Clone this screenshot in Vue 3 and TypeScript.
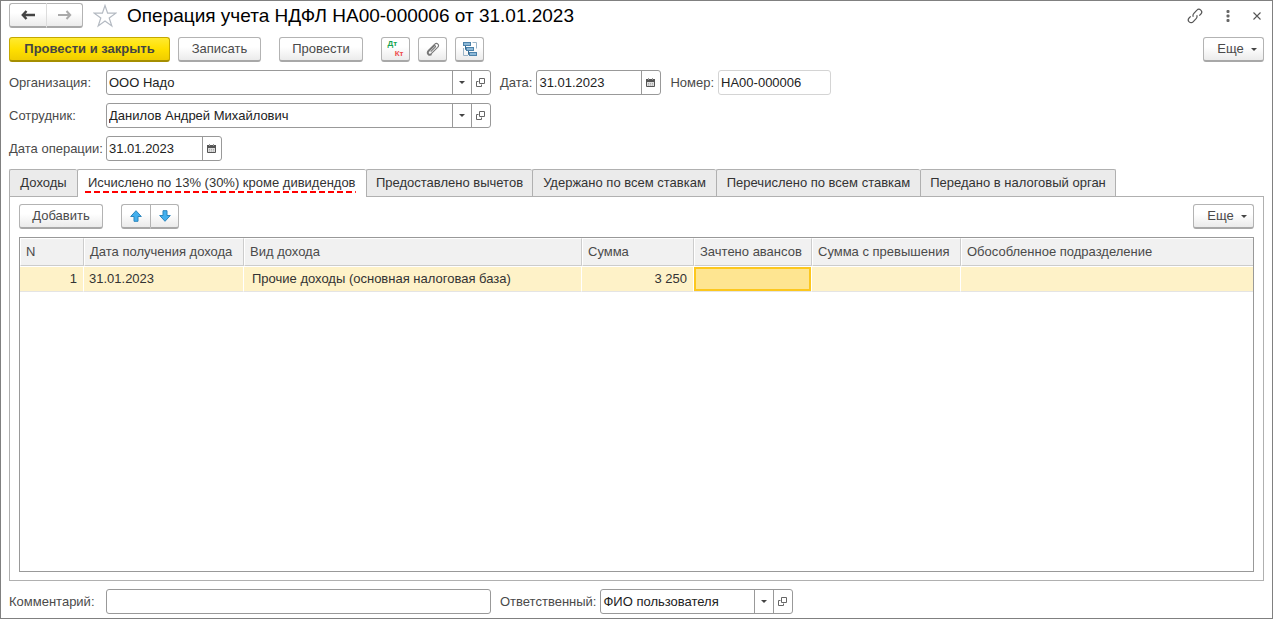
<script setup lang="ts">
import { ref } from 'vue'

interface Tab {
  title: string
  width: number
}

interface IncomeRow {
  n: number
  date: string
  kind: string
  sum: string
  advance: string
  excess: string
  department: string
}

const organization = ref('ООО Надо')
const employee = ref('Данилов Андрей Михайлович')
const docDate = ref('31.01.2023')
const docNumber = ref('НА00-000006')
const operationDate = ref('31.01.2023')
const comment = ref('')
const responsible = ref('ФИО пользователя')
const activeTab = ref(1)

const tabs: Tab[] = [
  { title: 'Доходы', width: 68 },
  { title: 'Исчислено по 13% (30%) кроме дивидендов', width: 289 },
  { title: 'Предоставлено вычетов', width: 166 },
  { title: 'Удержано по всем ставкам', width: 184 },
  { title: 'Перечислено по всем ставкам', width: 204 },
  { title: 'Передано в налоговый орган', width: 196 },
]

const rows: IncomeRow[] = [
  {
    n: 1,
    date: '31.01.2023',
    kind: 'Прочие доходы (основная налоговая база)',
    sum: '3 250',
    advance: '',
    excess: '',
    department: '',
  },
]
</script>

<template>
  <main class="window">
    <header class="titlebar">
      <div class="group nav">
        <button type="button" class="btn" aria-label="Назад">
          <svg width="14" height="12" viewBox="0 0 14 12"><path d="M5.500 2 1.800 6 5.500 10M2 6H14" fill="none" stroke="#444" stroke-width="2.4" /></svg>
        </button>
        <button type="button" class="btn" aria-label="Вперед">
          <svg width="14" height="12" viewBox="0 0 14 12"><path d="M8.500 2 12.200 6 8.500 10M12 6H0" fill="none" stroke="#aaa" stroke-width="2" /></svg>
        </button>
      </div>
      <button type="button" class="plain star" aria-label="В избранное">
        <svg width="24" height="24" viewBox="0 0 24 24"><path d="M12 1.500 14.600 9.200H22.800L16.200 14 18.800 22 12 17.100 5.200 22 7.800 14 1.200 9.200H9.400Z" fill="#fff" stroke="#b4bac2" stroke-width="1.200" /></svg>
      </button>
      <h1>Операция учета НДФЛ НА00-000006 от 31.01.2023</h1>
      <div class="window-tools">
        <button type="button" class="plain" aria-label="Получить ссылку">
          <svg width="16" height="16" viewBox="0 0 16 16" fill="none" stroke="#555" stroke-width="1.2"><path d="M6.300 8.800C5.700 7.600 6 6.300 6.900 5.300L9.900 2.200C11 1 12.600 1 13.800 2.100 15 3.300 15 4.900 13.900 6L12.300 7.600" /><path d="M9.700 7.200C10.300 8.400 10 9.700 9.100 10.700L6.100 13.800C5 15 3.400 15 2.200 13.900 1 12.700 1 11.100 2.100 10L3.700 8.400" /></svg>
        </button>
        <button type="button" class="plain" aria-label="Меню">
          <svg width="4" height="12" viewBox="0 0 4 12" fill="#666"><rect x=".5" y="0" width="3" height="3" rx="1" /><rect x=".5" y="4.500" width="3" height="3" rx="1" /><rect x=".5" y="9" width="3" height="3" rx="1" /></svg>
        </button>
        <button type="button" class="plain" aria-label="Закрыть">
          <svg width="8" height="8" viewBox="0 0 8 8"><path d="M.5.5 7.500 7.500M7.500.5.5 7.500" stroke="#555" stroke-width="1.1" /></svg>
        </button>
      </div>
    </header>

    <div class="toolbar">
      <button type="button" class="btn primary">Провести и закрыть</button>
      <button type="button" class="btn save">Записать</button>
      <button type="button" class="btn post">Провести</button>
      <button type="button" class="btn icon entries" aria-label="Дт Кт">
        <span class="dtkt"><span class="dt">Дт</span><span class="kt">Кт</span></span>
      </button>
      <button type="button" class="btn icon" aria-label="Присоединенные файлы">
        <svg width="14" height="14" viewBox="0 0 14 14" fill="none" stroke="#777" stroke-width="1.1"><path d="M4.700 9.700 9.200 5.200C10 4.300 9 3.200 8.100 4L3 9.200C1 11.300 3.300 13.500 5.300 11.600L11.600 5.400C14 2.800 11 0 8.500 2.400L2.400 8.400C-.2 11.200 2.800 14.600 5.800 12.600" /></svg>
      </button>
      <button type="button" class="btn icon" aria-label="Структура подчиненности">
        <svg width="14" height="14" viewBox="0 0 14 14"><path d="M9.500.5H13.500V6.500M.5 6V13.500H5" fill="none" stroke="#9ab4c8" /><path d="M2.500 4V7.500H4M5.500 9V12.500H7" fill="none" stroke="#34688f" /><rect x=".5" y=".5" width="7" height="3" fill="#8db9d8" stroke="#4c82aa" /><rect x="3.500" y="5.500" width="7" height="3" fill="#8db9d8" stroke="#4c82aa" /><rect x="6.500" y="10.500" width="7" height="3" fill="#8db9d8" stroke="#4c82aa" /></svg>
      </button>
      <button type="button" class="btn more">Еще<svg width="6" height="3" viewBox="0 0 6 3"><path d="M0 0H6L3 3Z" fill="#444" /></svg></button>
    </div>

    <section class="fields">
      <div class="line">
        <label class="lead" for="org">Организация:</label>
        <div class="field wide">
          <input id="org" v-model="organization" type="text" />
          <button type="button" aria-label="Выбрать организацию"><svg width="6" height="3" viewBox="0 0 6 3"><path d="M0 0H6L3 3Z" fill="#444" /></svg></button>
          <button type="button" aria-label="Открыть организацию"><svg width="9" height="9" viewBox="0 0 9 9" fill="none" stroke="#666"><path d="M3.500.5H8.500V5.500H3.500ZM2.500 3.500H.5V8.500H5.500V6.500" /></svg></button>
        </div>
        <label class="next" for="date">Дата:</label>
        <div class="field date">
          <input id="date" v-model="docDate" type="text" />
          <button type="button" aria-label="Выбрать дату"><svg width="9" height="9" viewBox="0 0 9 9"><path d="M.5 1.500H8.500V8.500H.5Z" fill="#ddd" stroke="#555" /><path d="M0 1H9V4H0Z" fill="#555" /><path d="M2.500 0V2M6.500 0V2" stroke="#999" /><path d="M2 5.500H7M2 7H7" stroke="#aaa" stroke-dasharray="1 1" /></svg></button>
        </div>
        <label class="next" for="number">Номер:</label>
        <div class="field number"><input id="number" v-model="docNumber" type="text" readonly /></div>
      </div>
      <div class="line">
        <label class="lead" for="employee">Сотрудник:</label>
        <div class="field wide">
          <input id="employee" v-model="employee" type="text" />
          <button type="button" aria-label="Выбрать сотрудника"><svg width="6" height="3" viewBox="0 0 6 3"><path d="M0 0H6L3 3Z" fill="#444" /></svg></button>
          <button type="button" aria-label="Открыть сотрудника"><svg width="9" height="9" viewBox="0 0 9 9" fill="none" stroke="#666"><path d="M3.500.5H8.500V5.500H3.500ZM2.500 3.500H.5V8.500H5.500V6.500" /></svg></button>
        </div>
      </div>
      <div class="line">
        <label class="lead" for="opdate">Дата операции:</label>
        <div class="field opdate">
          <input id="opdate" v-model="operationDate" type="text" />
          <button type="button" aria-label="Выбрать дату операции"><svg width="9" height="9" viewBox="0 0 9 9"><path d="M.5 1.500H8.500V8.500H.5Z" fill="#ddd" stroke="#555" /><path d="M0 1H9V4H0Z" fill="#555" /><path d="M2.500 0V2M6.500 0V2" stroke="#999" /><path d="M2 5.500H7M2 7H7" stroke="#aaa" stroke-dasharray="1 1" /></svg></button>
        </div>
      </div>
    </section>

    <div class="tabs" role="tablist">
      <button
        v-for="(tab, i) in tabs"
        :key="tab.title"
        type="button"
        role="tab"
        class="tab"
        :class="{ active: i === activeTab }"
        :aria-selected="i === activeTab"
        :style="{ width: tab.width + 'px' }"
        @click="activeTab = i"
      >
        <span>{{ tab.title }}</span>
      </button>
    </div>

    <section class="panel" role="tabpanel">
      <div class="panel-tools">
        <button type="button" class="btn add">Добавить</button>
        <div class="group move">
          <button type="button" class="btn" aria-label="Переместить вверх">
            <svg width="12" height="12" viewBox="0 0 12 12"><path d="M6 .7 11.300 6.500H8V11.300H4V6.500H.7Z" fill="#43b0ee" stroke="#2b86bd" /></svg>
          </button>
          <button type="button" class="btn" aria-label="Переместить вниз">
            <svg width="12" height="12" viewBox="0 0 12 12"><path d="M6 11.300 11.300 5.500H8V.7H4V5.500H.7Z" fill="#43b0ee" stroke="#2b86bd" /></svg>
          </button>
        </div>
        <button type="button" class="btn more">Еще<svg width="6" height="3" viewBox="0 0 6 3"><path d="M0 0H6L3 3Z" fill="#444" /></svg></button>
      </div>
      <div class="grid">
        <table>
          <colgroup>
            <col class="c-n" /><col class="c-date" /><col class="c-kind" /><col class="c-sum" /><col class="c-adv" /><col class="c-exc" /><col />
          </colgroup>
          <thead>
            <tr>
              <th>N</th>
              <th>Дата получения дохода</th>
              <th>Вид дохода</th>
              <th>Сумма</th>
              <th>Зачтено авансов</th>
              <th>Сумма с превышения</th>
              <th>Обособленное подразделение</th>
            </tr>
          </thead>
          <tbody>
            <tr v-for="row in rows" :key="row.n">
              <td class="num">{{ row.n }}</td>
              <td>{{ row.date }}</td>
              <td class="kind">{{ row.kind }}</td>
              <td class="num">{{ row.sum }}</td>
              <td class="current">{{ row.advance }}</td>
              <td>{{ row.excess }}</td>
              <td>{{ row.department }}</td>
            </tr>
          </tbody>
        </table>
      </div>
    </section>

    <footer class="line bottom">
      <label class="lead" for="comment">Комментарий:</label>
      <div class="field wide"><input id="comment" v-model="comment" type="text" /></div>
      <label class="next" for="responsible">Ответственный:</label>
      <div class="field responsible">
        <input id="responsible" v-model="responsible" type="text" />
        <button type="button" aria-label="Выбрать ответственного"><svg width="6" height="3" viewBox="0 0 6 3"><path d="M0 0H6L3 3Z" fill="#444" /></svg></button>
        <button type="button" aria-label="Открыть ответственного"><svg width="9" height="9" viewBox="0 0 9 9" fill="none" stroke="#666"><path d="M3.500.5H8.500V5.500H3.500ZM2.500 3.500H.5V8.500H5.500V6.500" /></svg></button>
      </div>
    </footer>
  </main>
</template>

<style>
body {
  margin: 0;
  background: #fff;
}
</style>

<style scoped>
* {
  box-sizing: border-box;
}
.window {
  display: flex;
  flex-direction: column;
  min-height: 100vh;
  padding: 2px 8px 4px;
  border: 1px solid #808080;
  background: #fff;
  color: #4a4a4a;
  font: 13px/16px "Liberation Sans", Arial, sans-serif;
}
button,
input {
  margin: 0;
  font: inherit;
  color: inherit;
}
svg {
  display: block;
  flex: none;
}
.titlebar {
  display: flex;
  align-items: center;
  height: 25px;
}
h1 {
  margin: 0 0 0 10px;
  color: #000;
  font-size: 19px;
  font-weight: 400;
  line-height: 24px;
  white-space: nowrap;
}
.plain {
  display: flex;
  align-items: center;
  justify-content: center;
  padding: 0;
  border: 0;
  background: none;
}
.star {
  width: 24px;
  margin-left: 10px;
}
.window-tools {
  display: flex;
  align-items: center;
  gap: 23px;
  margin-left: auto;
  padding-right: 3px;
}
.btn {
  display: flex;
  align-items: center;
  justify-content: center;
  height: 25px;
  padding: 0;
  border: 1px solid #b3b3b3;
  border-bottom: 2px solid #a8a8a8;
  border-radius: 3px;
  background: linear-gradient(#fff 40%, #ebebeb);
  white-space: nowrap;
}
.group {
  display: flex;
}
.group .btn:first-child {
  border-right: 0;
  border-radius: 3px 0 0 3px;
}
.group .btn:last-child {
  border-radius: 0 3px 3px 0;
}
.nav .btn {
  width: 37px;
}
.nav .btn:last-child {
  border-left-color: #ddd;
}
.toolbar {
  display: flex;
  gap: 8px;
  margin-top: 9px;
}
.primary {
  width: 161px;
  border-color: #c4a800;
  border-bottom-color: #a58e00;
  background: linear-gradient(#ffea30, #ffe000 50%, #f0cd00);
  color: #444;
  font-weight: 700;
}
.save {
  width: 83px;
}
.post {
  width: 84px;
  margin-left: 10px;
}
.icon {
  width: 29px;
}
.entries {
  margin-left: 10px;
}
.dtkt {
  display: flex;
  flex-direction: column;
  width: 16px;
  font-size: 8px;
  font-weight: 700;
  line-height: 10px;
}
.dt {
  align-self: flex-start;
  color: #16a452;
}
.kt {
  align-self: flex-end;
  color: #ee4d4d;
}
.more {
  gap: 7px;
  width: 61px;
  margin-left: auto;
  padding-left: 7px;
}
.fields {
  display: flex;
  flex-direction: column;
  gap: 8px;
  margin-top: 8px;
}
.line {
  display: flex;
  align-items: center;
}
.lead {
  flex: none;
  width: 97px;
  white-space: nowrap;
}
.next {
  margin: 0 4px 0 9px;
  white-space: nowrap;
}
.field {
  display: flex;
  height: 25px;
  border: 1px solid #999;
  border-radius: 3px;
  background: #fff;
  color: #222;
}
.field input {
  flex: 1;
  min-width: 0;
  padding: 0 2px;
  border: 0;
  outline: 0;
  background: none;
}
.field button {
  display: flex;
  flex: none;
  align-items: center;
  justify-content: center;
  width: 19px;
  padding: 0 1px 0 0;
  border: 0;
  border-left: 1px solid #999;
  background: none;
}
.wide {
  width: 385px;
}
.date {
  width: 125px;
}
.number {
  width: 113px;
  border-color: #d4d4d4;
}
.opdate {
  width: 116px;
}
.responsible {
  width: 193px;
}
.tabs {
  display: flex;
  margin-top: 8px;
}
.tab {
  height: 27px;
  padding: 0;
  border: 1px solid #b0b0b0;
  border-right: 0;
  border-bottom: 0;
  border-radius: 2px 2px 0 0;
  background: #ebebeb;
  color: #333;
  white-space: nowrap;
}
.tab:last-child {
  border-right: 1px solid #b0b0b0;
}
.tab.active {
  z-index: 1;
  height: 28px;
  margin-bottom: -1px;
  padding-left: 7px;
  background: #fff;
  text-align: left;
}
.tab span {
  display: inline-block;
}
.tab.active span {
  padding: 0 0 2px 3px;
  background: repeating-linear-gradient(90deg, #f00 0 6px, transparent 6px 9px) bottom / 100% 2px no-repeat;
}
.panel {
  display: flex;
  flex: 1;
  flex-direction: column;
  padding: 7px 9px 8px;
  border: 1px solid #b0b0b0;
}
.panel-tools {
  display: flex;
}
.add {
  width: 84px;
}
.move {
  margin-left: 18px;
}
.move .btn {
  width: 29px;
}
.grid {
  flex: 1;
  margin-top: 8px;
  border: 1px solid #999;
}
table {
  width: 100%;
  border-collapse: separate;
  border-spacing: 0;
  table-layout: fixed;
}
.c-n {
  width: 64px;
}
.c-date {
  width: 160px;
}
.c-kind {
  width: 338px;
}
.c-sum {
  width: 112px;
}
.c-adv {
  width: 118px;
}
.c-exc {
  width: 149px;
}
th {
  height: 28px;
  padding: 0 5px;
  border: 1px solid #fff;
  border-right-color: #ccc;
  border-bottom-color: #ccc;
  background: #f1f1f1;
  font-weight: 400;
  text-align: left;
  white-space: nowrap;
}
td {
  height: 26px;
  padding: 0 5px;
  border-right: 1px solid #fff;
  border-top: 1px solid #fff;
  border-bottom: 1px solid #e4e4e4;
  background: #fef2c8;
  color: #333;
  white-space: nowrap;
}
th:last-child,
td:last-child {
  border-right: 0;
}
.num {
  padding-right: 6px;
  text-align: right;
}
.kind {
  padding-left: 8px;
}
.current {
  background: #fee591;
  box-shadow: inset 0 0 0 2px #fcc71e;
}
.bottom {
  margin-top: 8px;
}
</style>
